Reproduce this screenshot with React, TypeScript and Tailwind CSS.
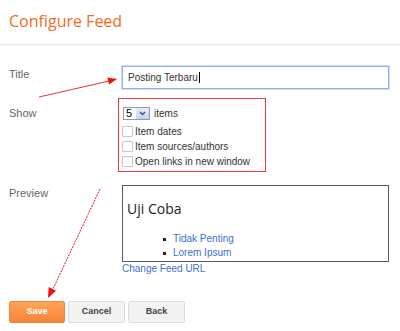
import React from "react";

const arial = { fontFamily: '"Liberation Sans", Arial, sans-serif' };

function Checkbox({ label }: { label: string }) {
  return (
    <div className="flex h-[15px] items-center">
      <span className="ml-[3px] box-border h-[11px] w-[11px] rounded-[1px] border border-[#c6c6c6] bg-white" />
      <span className="ml-[2px] text-[10px] leading-[15px] text-[#333]">{label}</span>
    </div>
  );
}

export default function App() {
  return (
    <div
      className="relative h-[331px] w-[400px] overflow-hidden bg-white"
      style={arial}
    >
      <div className="flex h-[45px] items-center border-b border-[#e6e6e6] pb-[2px] pl-[9px]">
        <span
          className="text-[16px] leading-[20px] text-[#f26b1d]"
          style={{ fontFamily: '"Open Sans", sans-serif' }}
        >
          Configure Feed
        </span>
      </div>

      <div className="px-[9px]">
        {/* Title row */}
        <div className="mt-[21px] flex">
          <div className="w-[113px] pt-[1px] text-[11px] leading-[14px] text-[#666]">Title</div>
          <div className="box-border flex h-[23px] w-[267px] items-center border border-[#8fb3ec] pl-[5px] shadow-[0_0_0_1px_#cddcf6]">
            <span className="text-[10px] text-[#333]">Posting Terbaru</span>
            <span className="ml-[1px] h-[11px] w-[1px] bg-black" />
          </div>
        </div>

        {/* Show row */}
        <div className="mt-[9px] flex">
          <div className="w-[109px] pt-[8px] text-[11px] leading-[14px] text-[#666]">Show</div>
          <div className="box-border h-[74px] w-[148px] border border-[#ee3b3b] pl-[0px] pt-[8px]">
            <div className="flex h-[13px] items-center">
              <div className="ml-[4px] box-border flex h-[13px] w-[27px] items-center border border-[#9a9a9a] bg-white">
                <span className="ml-[2px] w-[9px] text-[11px] leading-[11px] text-black">5</span>
                <span className="ml-auto flex h-[11px] w-[13px] items-center justify-center bg-gradient-to-b from-[#e4edfb] to-[#c2d6f6]">
                  <svg width="7" height="5" viewBox="0 0 7 5">
                    <path d="M1 1 L3.5 3.5 L6 1" stroke="#2d4f8a" strokeWidth="1.4" fill="none" />
                  </svg>
                </span>
              </div>
              <span className="ml-[4px] text-[10px] text-[#333]">items</span>
            </div>
            <div className="mt-[4px]">
              <Checkbox label="Item dates" />
              <Checkbox label="Item sources/authors" />
              <Checkbox label="Open links in new window" />
            </div>
          </div>
        </div>

        {/* Preview row */}
        <div className="mt-[13px] flex">
          <div className="w-[113px] pt-[1px] text-[11px] leading-[14px] text-[#666]">Preview</div>
          <div>
            <div className="box-border h-[77px] w-[267px] border border-[#5a5a5a] pl-[4px] pt-[13px]">
              <div
                className="text-[14px] leading-[19px] text-[#222]"
                style={{ fontFamily: '"Open Sans", sans-serif' }}
              >
                Uji Coba
              </div>
              <div className="mt-[14px] pl-[36px]">
                {["Tidak Penting", "Lorem Ipsum"].map((t) => (
                  <div key={t} className="flex h-[14px] items-center">
                    <span className="h-[3px] w-[3px] bg-[#222]" />
                    <span className="ml-[7px] text-[10px] leading-[14px] text-[#3b6fd0]">{t}</span>
                  </div>
                ))}
              </div>
            </div>
            <div className="text-[10px] leading-[14px] text-[#3b6fd0]">Change Feed URL</div>
          </div>
        </div>

        {/* Buttons */}
        <div className="mt-[25px] flex gap-[3px]">
          <button className="box-border flex h-[22px] w-[56px] items-center justify-center rounded-[2px] border border-[#f4843b] bg-gradient-to-b from-[#ffa459] to-[#f68535] text-[9px] font-bold text-white">
            Save
          </button>
          <button className="box-border flex h-[22px] w-[57px] items-center justify-center rounded-[2px] border border-[#dcdcdc] bg-[#f2f2f2] text-[9px] font-bold text-[#444]">
            Cancel
          </button>
          <button className="box-border flex h-[22px] w-[57px] items-center justify-center rounded-[2px] border border-[#dcdcdc] bg-[#f2f2f2] text-[9px] font-bold text-[#444]">
            Back
          </button>
        </div>
      </div>

      {/* Annotation arrows */}
      <svg
        className="pointer-events-none absolute left-0 top-0"
        width="400"
        height="331"
        viewBox="0 0 400 331"
      >
        <line x1="39" y1="97" x2="109" y2="81" stroke="#f03030" strokeWidth="1" />
        <polygon points="117,79 109,84.4 107.4,77.6" fill="#ee1111" />
        <line
          x1="100"
          y1="189"
          x2="53"
          y2="289"
          stroke="#e81818"
          strokeWidth="1"
          strokeDasharray="2 1"
        />
        <polygon points="48,298 56,290.7 48.7,287" fill="#ee1111" />
      </svg>
    </div>
  );
}
